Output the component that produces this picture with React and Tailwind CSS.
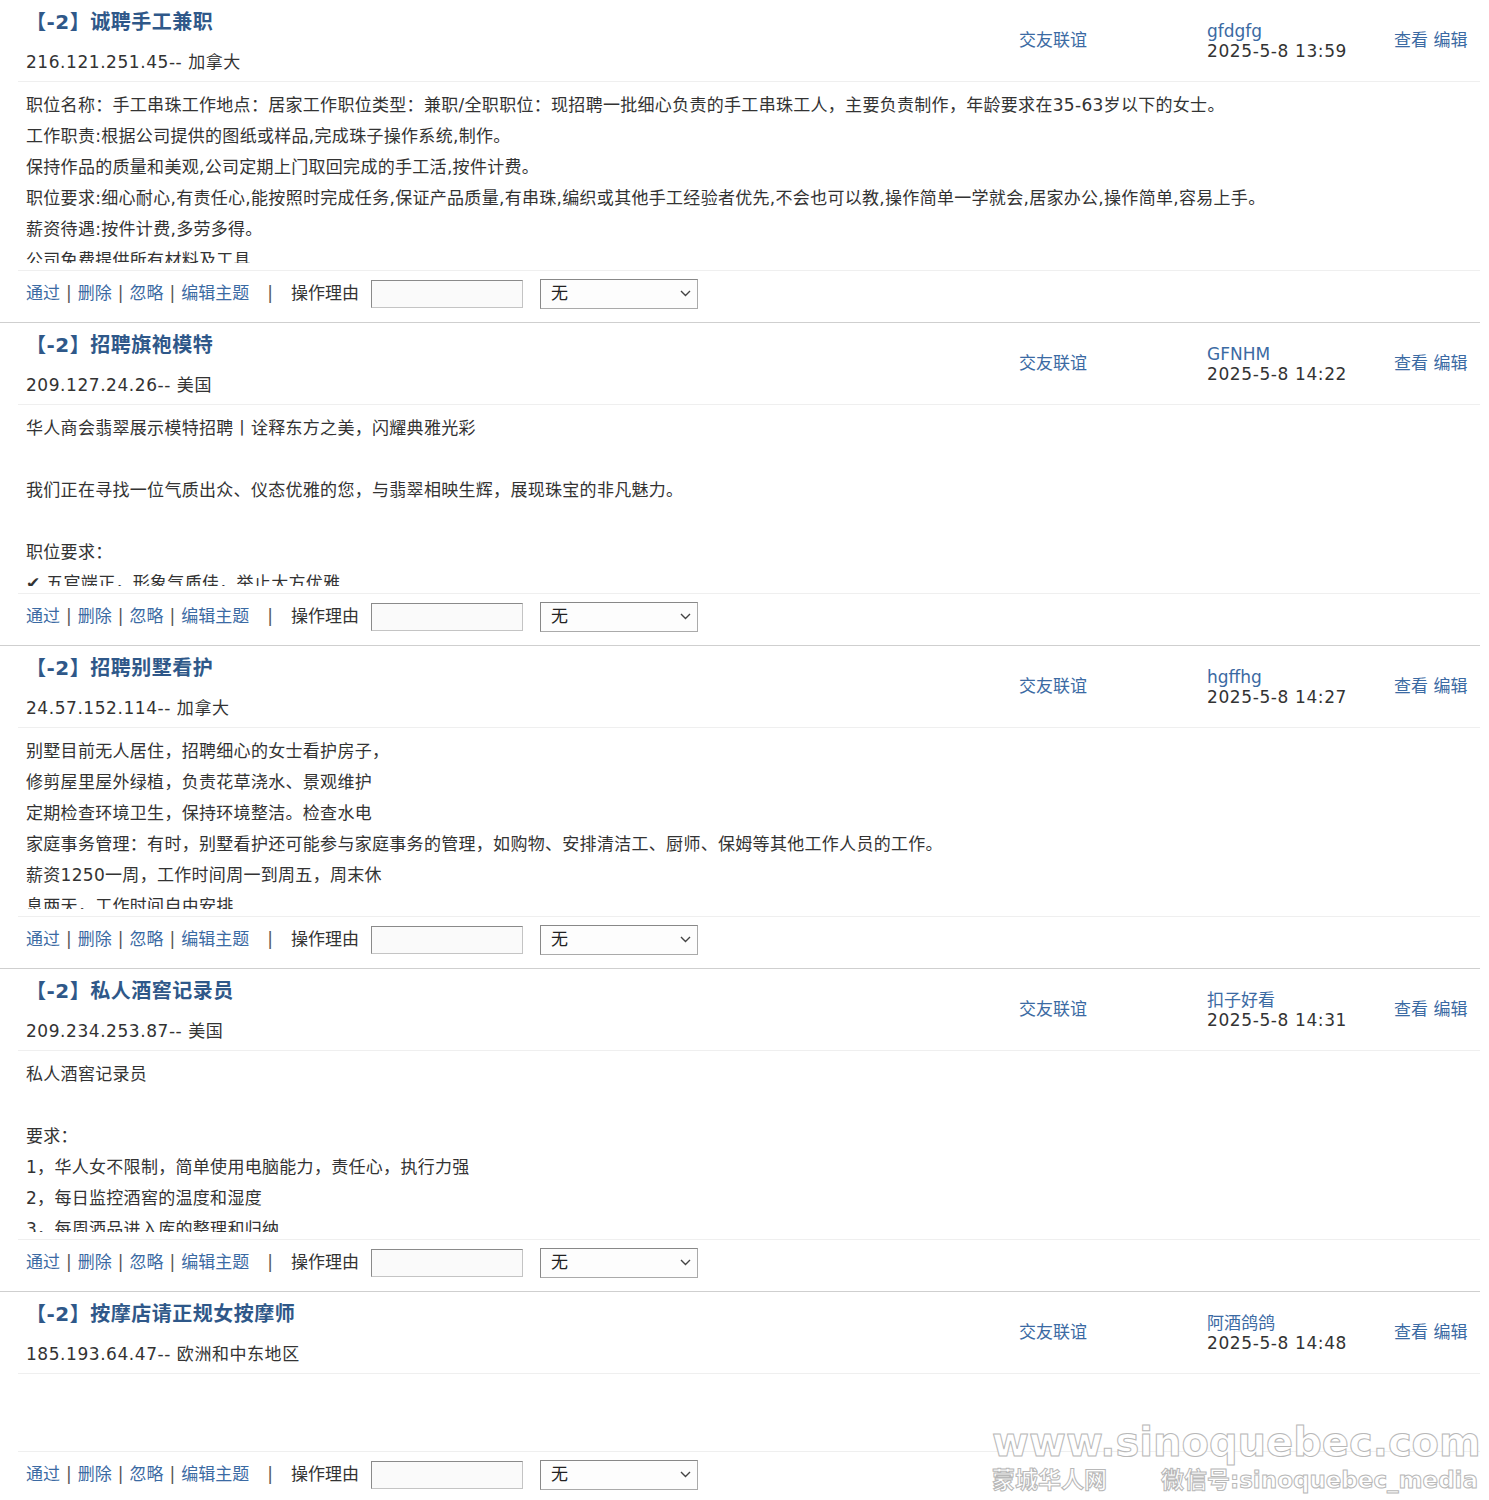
import React from 'react';

const posts = [
  {
    title: '【-2】诚聘手工兼职',
    ip: '216.121.251.45-- 加拿大',
    user: 'gfdgfg',
    date: '2025-5-8 13:59',
    lines: [
      '职位名称：手工串珠工作地点：居家工作职位类型：兼职/全职职位：现招聘一批细心负责的手工串珠工人，主要负责制作，年龄要求在35-63岁以下的女士。',
      '工作职责:根据公司提供的图纸或样品,完成珠子操作系统,制作。',
      '保持作品的质量和美观,公司定期上门取回完成的手工活,按件计费。',
      '职位要求:细心耐心,有责任心,能按照时完成任务,保证产品质量,有串珠,编织或其他手工经验者优先,不会也可以教,操作简单一学就会,居家办公,操作简单,容易上手。',
      '薪资待遇:按件计费,多劳多得。',
      '公司免费提供所有材料及工具',
    ],
  },
  {
    title: '【-2】招聘旗袍模特',
    ip: '209.127.24.26-- 美国',
    user: 'GFNHM',
    date: '2025-5-8 14:22',
    lines: [
      '华人商会翡翠展示模特招聘丨诠释东方之美，闪耀典雅光彩',
      '',
      '我们正在寻找一位气质出众、仪态优雅的您，与翡翠相映生辉，展现珠宝的非凡魅力。',
      '',
      '职位要求：',
      '✔ 五官端正，形象气质佳，举止大方优雅',
    ],
  },
  {
    title: '【-2】招聘别墅看护',
    ip: '24.57.152.114-- 加拿大',
    user: 'hgffhg',
    date: '2025-5-8 14:27',
    lines: [
      '别墅目前无人居住，招聘细心的女士看护房子，',
      '修剪屋里屋外绿植，负责花草浇水、景观维护',
      '定期检查环境卫生，保持环境整洁。检查水电',
      '家庭事务管理：有时，别墅看护还可能参与家庭事务的管理，如购物、安排清洁工、厨师、保姆等其他工作人员的工作。',
      '薪资1250一周，工作时间周一到周五，周末休',
      '息两天，工作时间自由安排',
    ],
  },
  {
    title: '【-2】私人酒窖记录员',
    ip: '209.234.253.87-- 美国',
    user: '扣子好看',
    date: '2025-5-8 14:31',
    lines: [
      '私人酒窖记录员',
      '',
      '要求：',
      '1，华人女不限制，简单使用电脑能力，责任心，执行力强',
      '2，每日监控酒窖的温度和湿度',
      '3，每周酒品进入库的整理和归纳',
    ],
  },
  {
    title: '【-2】按摩店请正规女按摩师',
    ip: '185.193.64.47-- 欧洲和中东地区',
    user: '阿酒鸽鸽',
    date: '2025-5-8 14:48',
    lines: ['', ''],
  },
];

function PostBlock({ post }) {
  return (
    <div className="w-[1480px] border-b border-[#cfcfcf]">
      <div className="ml-[18px]">
        {/* header */}
        <div className="flex h-[82px] border-b border-[#efefef] box-border">
          <div className="w-[993px] pl-2 flex flex-col">
            <div className="h-[44px] flex items-center text-[20px] font-bold text-[#2f5889] tracking-[0.5px]">
              {post.title}
            </div>
            <div className="h-[37px] flex items-center text-[#333] tracking-[0.55px]">{post.ip}</div>
          </div>
          <div className="w-[188px] pl-2 flex items-center text-[#3b6aa3]">交友联谊</div>
          <div className="w-[187px] pl-2 flex flex-col justify-center leading-[20px]">
            <span className="text-[#3b6aa3]">{post.user}</span>
            <span className="text-[#333] tracking-[0.6px]">{post.date}</span>
          </div>
          <div className="flex-1 pl-2 flex items-center text-[#3b6aa3]">查看 编辑</div>
        </div>

        {/* content */}
        <div className="pt-[8px] pb-[7px] pl-2 border-b border-[#efefef] text-[#333]">
          <div className="max-h-[173px] overflow-hidden leading-[31px] tracking-[0.3px]">
            {post.lines.map((l, i) => (
              <div key={i} className="h-[31px] whitespace-nowrap">
                {l}
              </div>
            ))}
          </div>
        </div>

        {/* actions */}
        <div className="h-[51px] pb-[5px] pl-2 flex items-center text-[#333]">
          <a className="text-[#3b6aa3]">通过</a>
          <span className="mx-[6px] text-[#555]">|</span>
          <a className="text-[#3b6aa3]">删除</a>
          <span className="mx-[6px] text-[#555]">|</span>
          <a className="text-[#3b6aa3]">忽略</a>
          <span className="mx-[6px] text-[#555]">|</span>
          <a className="text-[#3b6aa3]">编辑主题</a>
          <span className="mx-[18px] text-[#555]">|</span>
          <span>操作理由</span>
          <input
            type="text"
            className="ml-[12px] w-[152px] h-[28px] bg-[#fafafa] border border-[#c4c4c4] border-t-[#8a8a8a] border-l-[#8a8a8a] outline-none"
          />
          <div className="relative ml-[17px]">
            <select className="appearance-none w-[158px] h-[30px] pl-[10px] bg-[#fdfdfd] border border-[#aaa] border-t-[#888] border-l-[#888] text-[#222] outline-none">
              <option>无</option>
            </select>
            <svg
              className="absolute right-[7px] top-[11px] pointer-events-none"
              width="11"
              height="7"
              viewBox="0 0 11 7"
              fill="none"
              stroke="#444"
              strokeWidth="1.4"
            >
              <path d="M1 1l4.5 4.5L10 1" />
            </svg>
          </div>
        </div>
      </div>
    </div>
  );
}

export default function App() {
  return (
    <div className="relative bg-white min-h-[1500px] text-[17px] font-['DejaVu_Sans','Noto_Sans_CJK_SC',sans-serif]">
      {posts.map((p, i) => (
        <PostBlock key={i} post={p} />
      ))}

      {/* watermark */}
      <div className="absolute left-[992px] top-[1419px] pointer-events-none text-white [-webkit-text-stroke:1px_#b8b8b8] select-none">
        <div className="text-[40px] leading-[46px] font-bold">www.sinoquebec.com</div>
        <div className="flex justify-between w-[486px] text-[23px] leading-[30px] font-bold">
          <span>蒙城华人网</span>
          <span>微信号:sinoquebec_media</span>
        </div>
      </div>
    </div>
  );
}
